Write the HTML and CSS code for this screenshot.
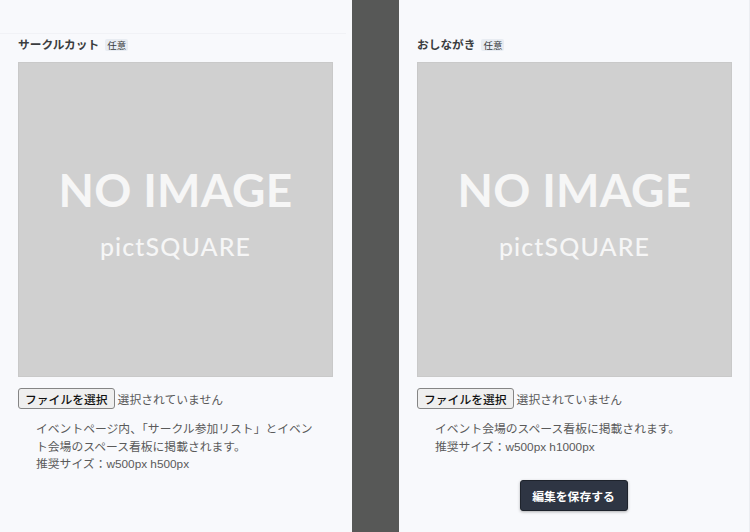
FILE: index.html
```html
<!DOCTYPE html>
<html lang="ja">
<head>
<meta charset="utf-8">
<title>画像設定</title>
<link rel="stylesheet" href="styles.css">
</head>
<body>
<div class="page">
  <section class="panel panel-left">
    <div class="sep"></div>
    <div class="field">
      <div class="label-row">
        <span class="label">サークルカット</span>
        <span class="badge">任意</span>
      </div>
      <div class="noimage">
        <span class="ni-main">NO IMAGE</span>
        <span class="ni-sub">pictSQUARE</span>
      </div>
      <div class="file-row">
        <span class="file-btn">ファイルを選択</span>
        <span class="file-status">選択されていません</span>
      </div>
      <p class="desc">イベントページ内、「サークル参加リスト」とイベン<br>ト会場のスペース看板に掲載されます。<br>推奨サイズ：w500px h500px</p>
    </div>
  </section>
  <div class="divider"></div>
  <section class="panel panel-right">
    <div class="sep sep-blank"></div>
    <div class="field">
      <div class="label-row">
        <span class="label">おしながき</span>
        <span class="badge">任意</span>
      </div>
      <div class="noimage">
        <span class="ni-main">NO IMAGE</span>
        <span class="ni-sub">pictSQUARE</span>
      </div>
      <div class="file-row">
        <span class="file-btn">ファイルを選択</span>
        <span class="file-status">選択されていません</span>
      </div>
      <p class="desc">イベント会場のスペース看板に掲載されます。<br>推奨サイズ：w500px h1000px</p>
    </div>
    <div class="actions">
      <button class="save-btn" type="button">編集を保存する</button>
    </div>
  </section>
</div>
</body>
</html>
```

FILE: styles.css
```css
html, body {
  margin: 0;
  padding: 0;
  width: 750px;
  height: 532px;
  overflow: hidden;
  background: #f8f9fc;
  font-family: "Liberation Sans", "Noto Sans CJK JP", sans-serif;
}

.page {
  display: flex;
  height: 532px;
}

.panel {
  background: #f8f9fc;
  box-sizing: border-box;
  padding: 33px 0 0 0;
}

.panel-left {
  width: 352px;
}

.sep {
  height: 1px;
  margin-right: 6px;
  background: #f1f2f6;
  margin-bottom: 1px;
}

.sep-blank {
  background: transparent;
}

.field {
  padding-left: 18px;
}

.divider {
  width: 47px;
  background: #575857;
}

.panel-right {
  flex: 1;
  display: flex;
  flex-direction: column;
  border-right: 1px solid #eceef2;
}

.label-row {
  display: flex;
  align-items: center;
  height: 18px;
  gap: 6px;
  margin-bottom: 9px;
}

.label {
  font-family: "Noto Sans CJK JP", sans-serif;
  font-weight: 700;
  font-size: 11.7px;
  color: #3b3d40;
  line-height: 18px;
}

.badge {
  font-family: "Noto Sans CJK JP", sans-serif;
  font-size: 9.5px;
  line-height: 12px;
  padding: 0 2px;
  background: #e8ecf2;
  color: #3b3d40;
  border-radius: 2px;
  margin-top: 1px;
}

.noimage {
  width: 315px;
  height: 315px;
  box-sizing: border-box;
  background: #d0d0d0;
  border: 1px solid #c9c9c9;
  display: flex;
  flex-direction: column;
  align-items: center;
  justify-content: center;
  color: #f6f6f6;
}

.ni-main {
  font-family: Lato, sans-serif;
  font-weight: 700;
  font-size: 46px;
  line-height: 46px;
  letter-spacing: 0.3px;
  margin-top: -14px;
}

.ni-sub {
  font-family: Lato, sans-serif;
  font-weight: 500;
  font-size: 25px;
  line-height: 26px;
  letter-spacing: 1.1px;
  margin-top: 20px;
}

.file-row {
  display: flex;
  align-items: center;
  margin-top: 11px;
  height: 21px;
  gap: 3px;
}

.file-btn {
  font-family: "Noto Sans CJK JP", sans-serif;
  font-size: 11.8px;
  font-weight: 500;
  color: #111;
  height: 21px;
  line-height: 19px;
  box-sizing: border-box;
  padding: 0 6px;
  background: #efefef;
  border: 1px solid #858585;
  border-radius: 3px;
}

.file-status {
  font-family: "Noto Sans CJK JP", sans-serif;
  font-size: 11.8px;
  color: #5a5a5a;
}

.desc {
  margin: 12px 0 0 18px;
  width: 290px;
  font-size: 11.8px;
  line-height: 17.5px;
  color: #5a5a5a;
}

.actions {
  display: flex;
  justify-content: center;
  margin-top: 24px;
  padding-right: 1px;
}

.save-btn {
  width: 108px;
  height: 31px;
  background: #2e3543;
  color: #fff;
  border: 1px solid #1e232c;
  border-radius: 3px;
  font-family: "Noto Sans CJK JP", sans-serif;
  font-weight: 700;
  font-size: 11.8px;
  box-shadow: 0 1px 3px rgba(0, 0, 0, 0.3);
  cursor: pointer;
}
```
